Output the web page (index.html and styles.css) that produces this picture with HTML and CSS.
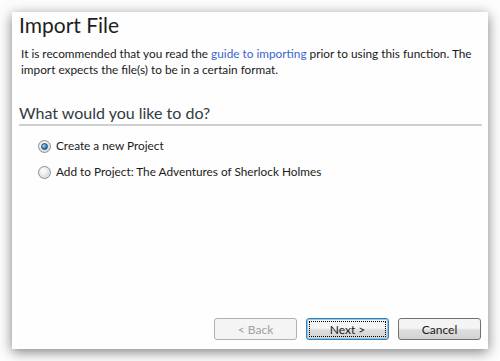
FILE: index.html
```html
<!DOCTYPE html>
<html lang="en">

<head>
    <meta charset="UTF-8">
    <title>Import File</title>
    <link rel="stylesheet" href="styles.css">
</head>

<body>
    <div class="dialog">
        <h1 class="title">Import File</h1>
        <p class="intro">It is recommended that you read the <a href="#">guide to importing</a> prior to using this function. The<br>
            import expects the file(s) to be in a certain format.</p>

        <h2 class="section">What would you like to do?</h2>

        <div class="options">
            <label class="option">
                <input type="radio" name="action" checked>
                <span>Create a new Project</span>
            </label>
            <label class="option">
                <input type="radio" name="action">
                <span>Add to Project: The Adventures of Sherlock Holmes</span>
            </label>
        </div>

        <div class="buttons">
            <button disabled>&lt; Back</button>
            <button class="default">Next &gt;</button>
            <button>Cancel</button>
        </div>
    </div>
</body>

</html>
```

FILE: styles.css
```css
body {
    margin: 0;
    padding: 12px;
    background-color: #fdfdfd;
    font-family: Lato, "Open Sans", sans-serif;
    font-size: 11.8px;
    color: #1a1a1a;
}

.dialog {
    width: 476px;
    height: 337px;
    box-sizing: border-box;
    background-color: #fefefe;
    box-shadow: 0 3px 12px rgba(0, 0, 0, 0.5);
    display: flex;
    flex-direction: column;
    padding: 0 6px 0 7px;
}

.title {
    margin: 0;
    font-size: 21px;
    font-weight: normal;
    line-height: 26px;
    color: #1e1e1e;
}

.intro {
    margin: 8px 0 0 2px;
    line-height: 16px;
    white-space: nowrap;
}

.intro a {
    color: #3a66cc;
    text-decoration: none;
}

.section {
    margin: 25px 0 0 0;
    padding-bottom: 1px;
    font-size: 16px;
    font-weight: normal;
    line-height: 20px;
    color: #333a44;
    border-bottom: 2px solid #cfcfcf;
}

.options {
    display: flex;
    flex-direction: column;
    gap: 10px;
    margin: 12px 0 0 19px;
}

.option {
    display: flex;
    align-items: center;
    gap: 5px;
    line-height: 16px;
}

.option input {
    appearance: none;
    margin: 0;
    width: 13px;
    height: 13px;
    border-radius: 50%;
    border: 1px solid #8e8f8f;
    background: radial-gradient(circle at 40% 35%, #ffffff, #d8d8d8 80%);
    display: grid;
    place-items: center;
}

.option input:checked::after {
    content: "";
    width: 5px;
    height: 5px;
    border-radius: 50%;
    background: radial-gradient(circle at 35% 35%, #a8e0ff, #1d6cab 70%);
    border: 1px solid #1b4c79;
}

.buttons {
    margin-top: auto;
    margin-bottom: 9px;
    display: flex;
    justify-content: flex-end;
    gap: 9px;
    padding-right: 1px;
}

button {
    width: 83px;
    height: 22px;
    font-family: inherit;
    font-size: 12px;
    color: #1a1a1a;
    background: linear-gradient(#f4f4f4 45%, #dddddd 55%, #d2d2d2);
    border: 1px solid #707070;
    border-radius: 3px;
    padding: 0;
}

button:disabled {
    color: #a0a0a0;
    background: #f4f4f4;
    border-color: #adb2b5;
}

button.default {
    border-color: #3c7fb1;
    box-shadow: inset 0 0 0 1px #8ccaef;
    outline: 1px dotted #000;
    outline-offset: -4px;
}
```
